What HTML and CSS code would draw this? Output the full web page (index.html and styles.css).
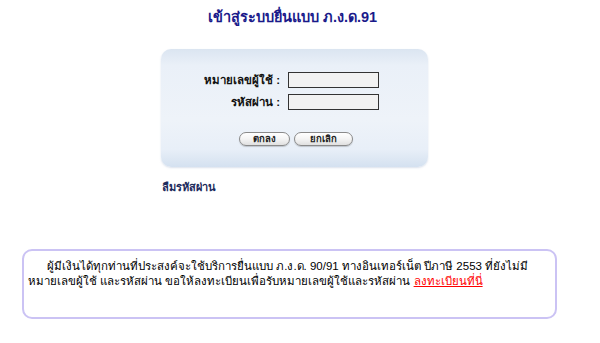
FILE: index.html
```html
<!DOCTYPE html>
<html lang="th">
<head>
<meta charset="utf-8">
<title>เข้าสู่ระบบยื่นแบบ ภ.ง.ด.91</title>
<link rel="stylesheet" href="styles.css">
</head>
<body>
<div class="page">
  <h1 class="title">เข้าสู่ระบบยื่นแบบ ภ.ง.ด.91</h1>
  <div class="login-box">
    <div class="fields">
      <label class="field-label" for="uid">หมายเลขผู้ใช้ :</label>
      <input class="field-input" id="uid" type="text">
      <label class="field-label" for="pwd">รหัสผ่าน :</label>
      <input class="field-input" id="pwd" type="password">
    </div>
    <div class="buttons">
      <button class="btn btn-ok" type="button">ตกลง</button>
      <button class="btn btn-cancel" type="button">ยกเลิก</button>
    </div>
  </div>
  <div class="forgot-row"><a class="forgot" href="#">ลืมรหัสผ่าน</a></div>
  <div class="notice">
    <p class="notice-text">ผู้มีเงินได้ทุกท่านที่ประสงค์จะใช้บริการยื่นแบบ ภ.ง.ด. 90/91 ทางอินเทอร์เน็ต ปีภาษี 2553 ที่ยังไม่มี หมายเลขผู้ใช้ และรหัสผ่าน ขอให้ลงทะเบียนเพื่อรับหมายเลขผู้ใช้และรหัสผ่าน <a class="register" href="#">ลงทะเบียนที่นี่</a></p>
  </div>
</div>
</body>
</html>
```

FILE: styles.css
```css
html, body {
  margin: 0;
  padding: 0;
  background: #ffffff;
}
body {
  font-family: Tahoma, "Liberation Sans", "Noto Sans", sans-serif;
  color: #000;
}
.page {
  width: 585px;
  display: flex;
  flex-direction: column;
}
.title {
  margin: 0;
  padding-top: 7px;
  height: 49px;
  box-sizing: border-box;
  text-align: center;
  font-size: 14.5px;
  font-weight: bold;
  color: #1a1a8a;
  line-height: 20px;
}
.login-box {
  margin-left: 161px;
  width: 267px;
  height: 118px;
  box-sizing: border-box;
  border-radius: 10px;
  background: linear-gradient(to bottom, #dbe5f1 0%, #eaf0f8 14%, #eef3f9 60%, #e8eff8 85%, #d4e1f0 100%);
  box-shadow: 0 1px 2px rgba(150, 170, 200, 0.35);
  padding-top: 23px;
  display: flex;
  flex-direction: column;
}
.fields {
  display: grid;
  grid-template-columns: 119px 91px;
  column-gap: 8px;
  row-gap: 6px;
  align-items: center;
}
.field-label {
  text-align: right;
  font-size: 11.5px;
  font-weight: bold;
  color: #111;
  line-height: 16px;
}
.field-input {
  box-sizing: border-box;
  width: 91px;
  height: 16px;
  margin: 0;
  padding: 0 2px;
  border: 1px solid #333;
  background: #f2f2f2;
  font-size: 11px;
}
.buttons {
  display: flex;
  gap: 4px;
  margin-left: 78px;
  margin-top: 22px;
}
.btn {
  box-sizing: border-box;
  height: 14px;
  padding: 0;
  border: 1px solid #8a8a8a;
  border-radius: 7px;
  background: linear-gradient(to bottom, #ffffff 0%, #f4f4f4 50%, #e0e0e0 100%);
  box-shadow: 0 1px 1px rgba(0,0,0,0.18);
  font-family: inherit;
  font-size: 9.5px;
  font-weight: bold;
  color: #222;
  line-height: 12px;
}
.btn-ok { width: 51px; }
.btn-cancel { width: 59px; }
.forgot-row {
  padding-left: 162px;
  margin-top: 12px;
  line-height: 14px;
}
.forgot {
  font-size: 11px;
  font-weight: bold;
  color: #1c2a5c;
  text-decoration: none;
}
.notice {
  margin-left: 22px;
  margin-top: 55px;
  width: 535px;
  height: 70px;
  box-sizing: border-box;
  border: 2px solid #cbc3f4;
  border-radius: 10px;
  padding: 8px 4px 0 4px;
}
.notice-text {
  margin: 0;
  text-indent: 19px;
  font-size: 11.5px;
  line-height: 15px;
  color: #000;
}
.register {
  color: #ff0000;
  text-decoration: underline;
}
```
